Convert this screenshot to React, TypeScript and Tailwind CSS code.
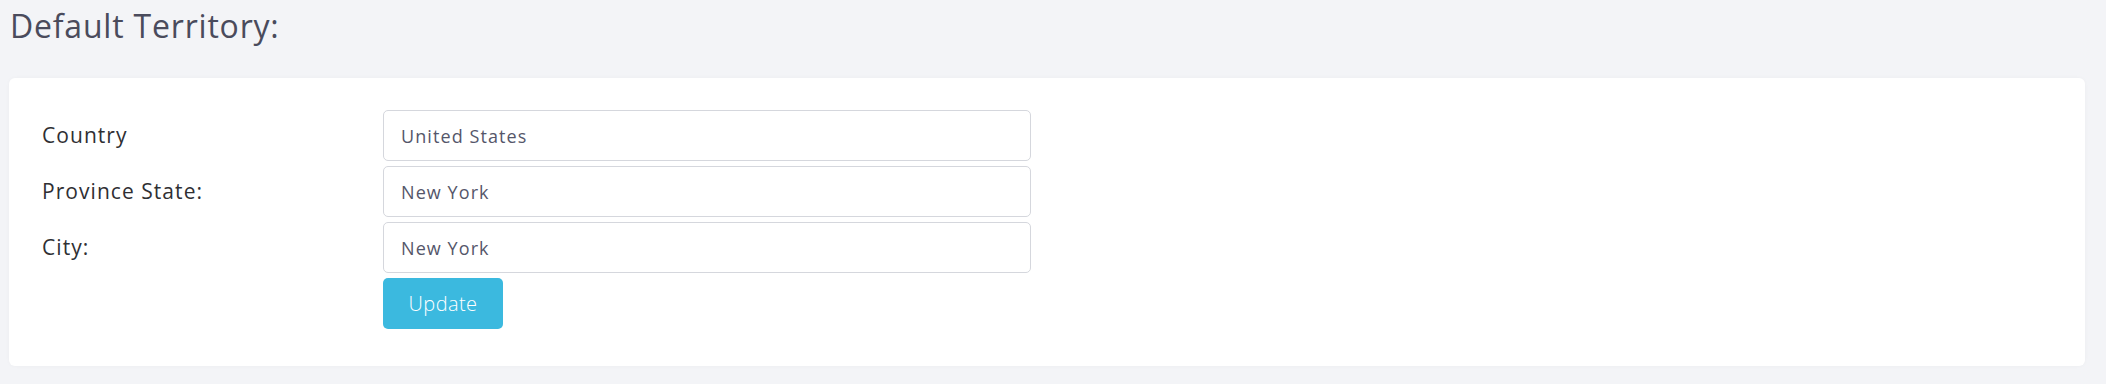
import React from "react";

const fields = [
  { label: "Country", value: "United States" },
  { label: "Province State:", value: "New York" },
  { label: "City:", value: "New York" },
];

export default function App() {
  return (
    <div
      className="min-h-[384px] w-full bg-[#f3f4f7] pl-[9px] pr-[21px] pb-[18px]"
      style={{ fontFamily: '"Open Sans", "Liberation Sans", sans-serif' }}
    >
      {/* Page title */}
      <h1 className="pt-[4px] pl-[1px] text-[32px] leading-[44px] font-normal tracking-[0.025em] text-[#4a4b5c]">
        Default Territory:
      </h1>

      {/* Card */}
      <div className="mt-[30px] rounded-[6px] bg-white pl-[33px] pt-[32px] pb-[37px] shadow-[0_0_4px_rgba(0,0,0,0.03)]">
        <div className="grid grid-cols-[341px_648px] gap-y-[5px]">
          {fields.map((f) => (
            <React.Fragment key={f.label}>
              <label className="flex items-center text-[21px] tracking-[0.05em] text-[#2f2f33]">
                {f.label}
              </label>
              <input
                readOnly
                value={f.value}
                className="h-[51px] w-full rounded-[5px] border border-[#d5d7dd] bg-white px-[17px] text-[18px] tracking-[0.06em] text-[#55566a] outline-none"
              />
            </React.Fragment>
          ))}
          <div />
          <div>
            <button className="h-[51px] w-[120px] rounded-[5px] bg-[#3bb9df] text-[20px] font-light tracking-[0.02em] text-white">
              Update
            </button>
          </div>
        </div>
      </div>
    </div>
  );
}
